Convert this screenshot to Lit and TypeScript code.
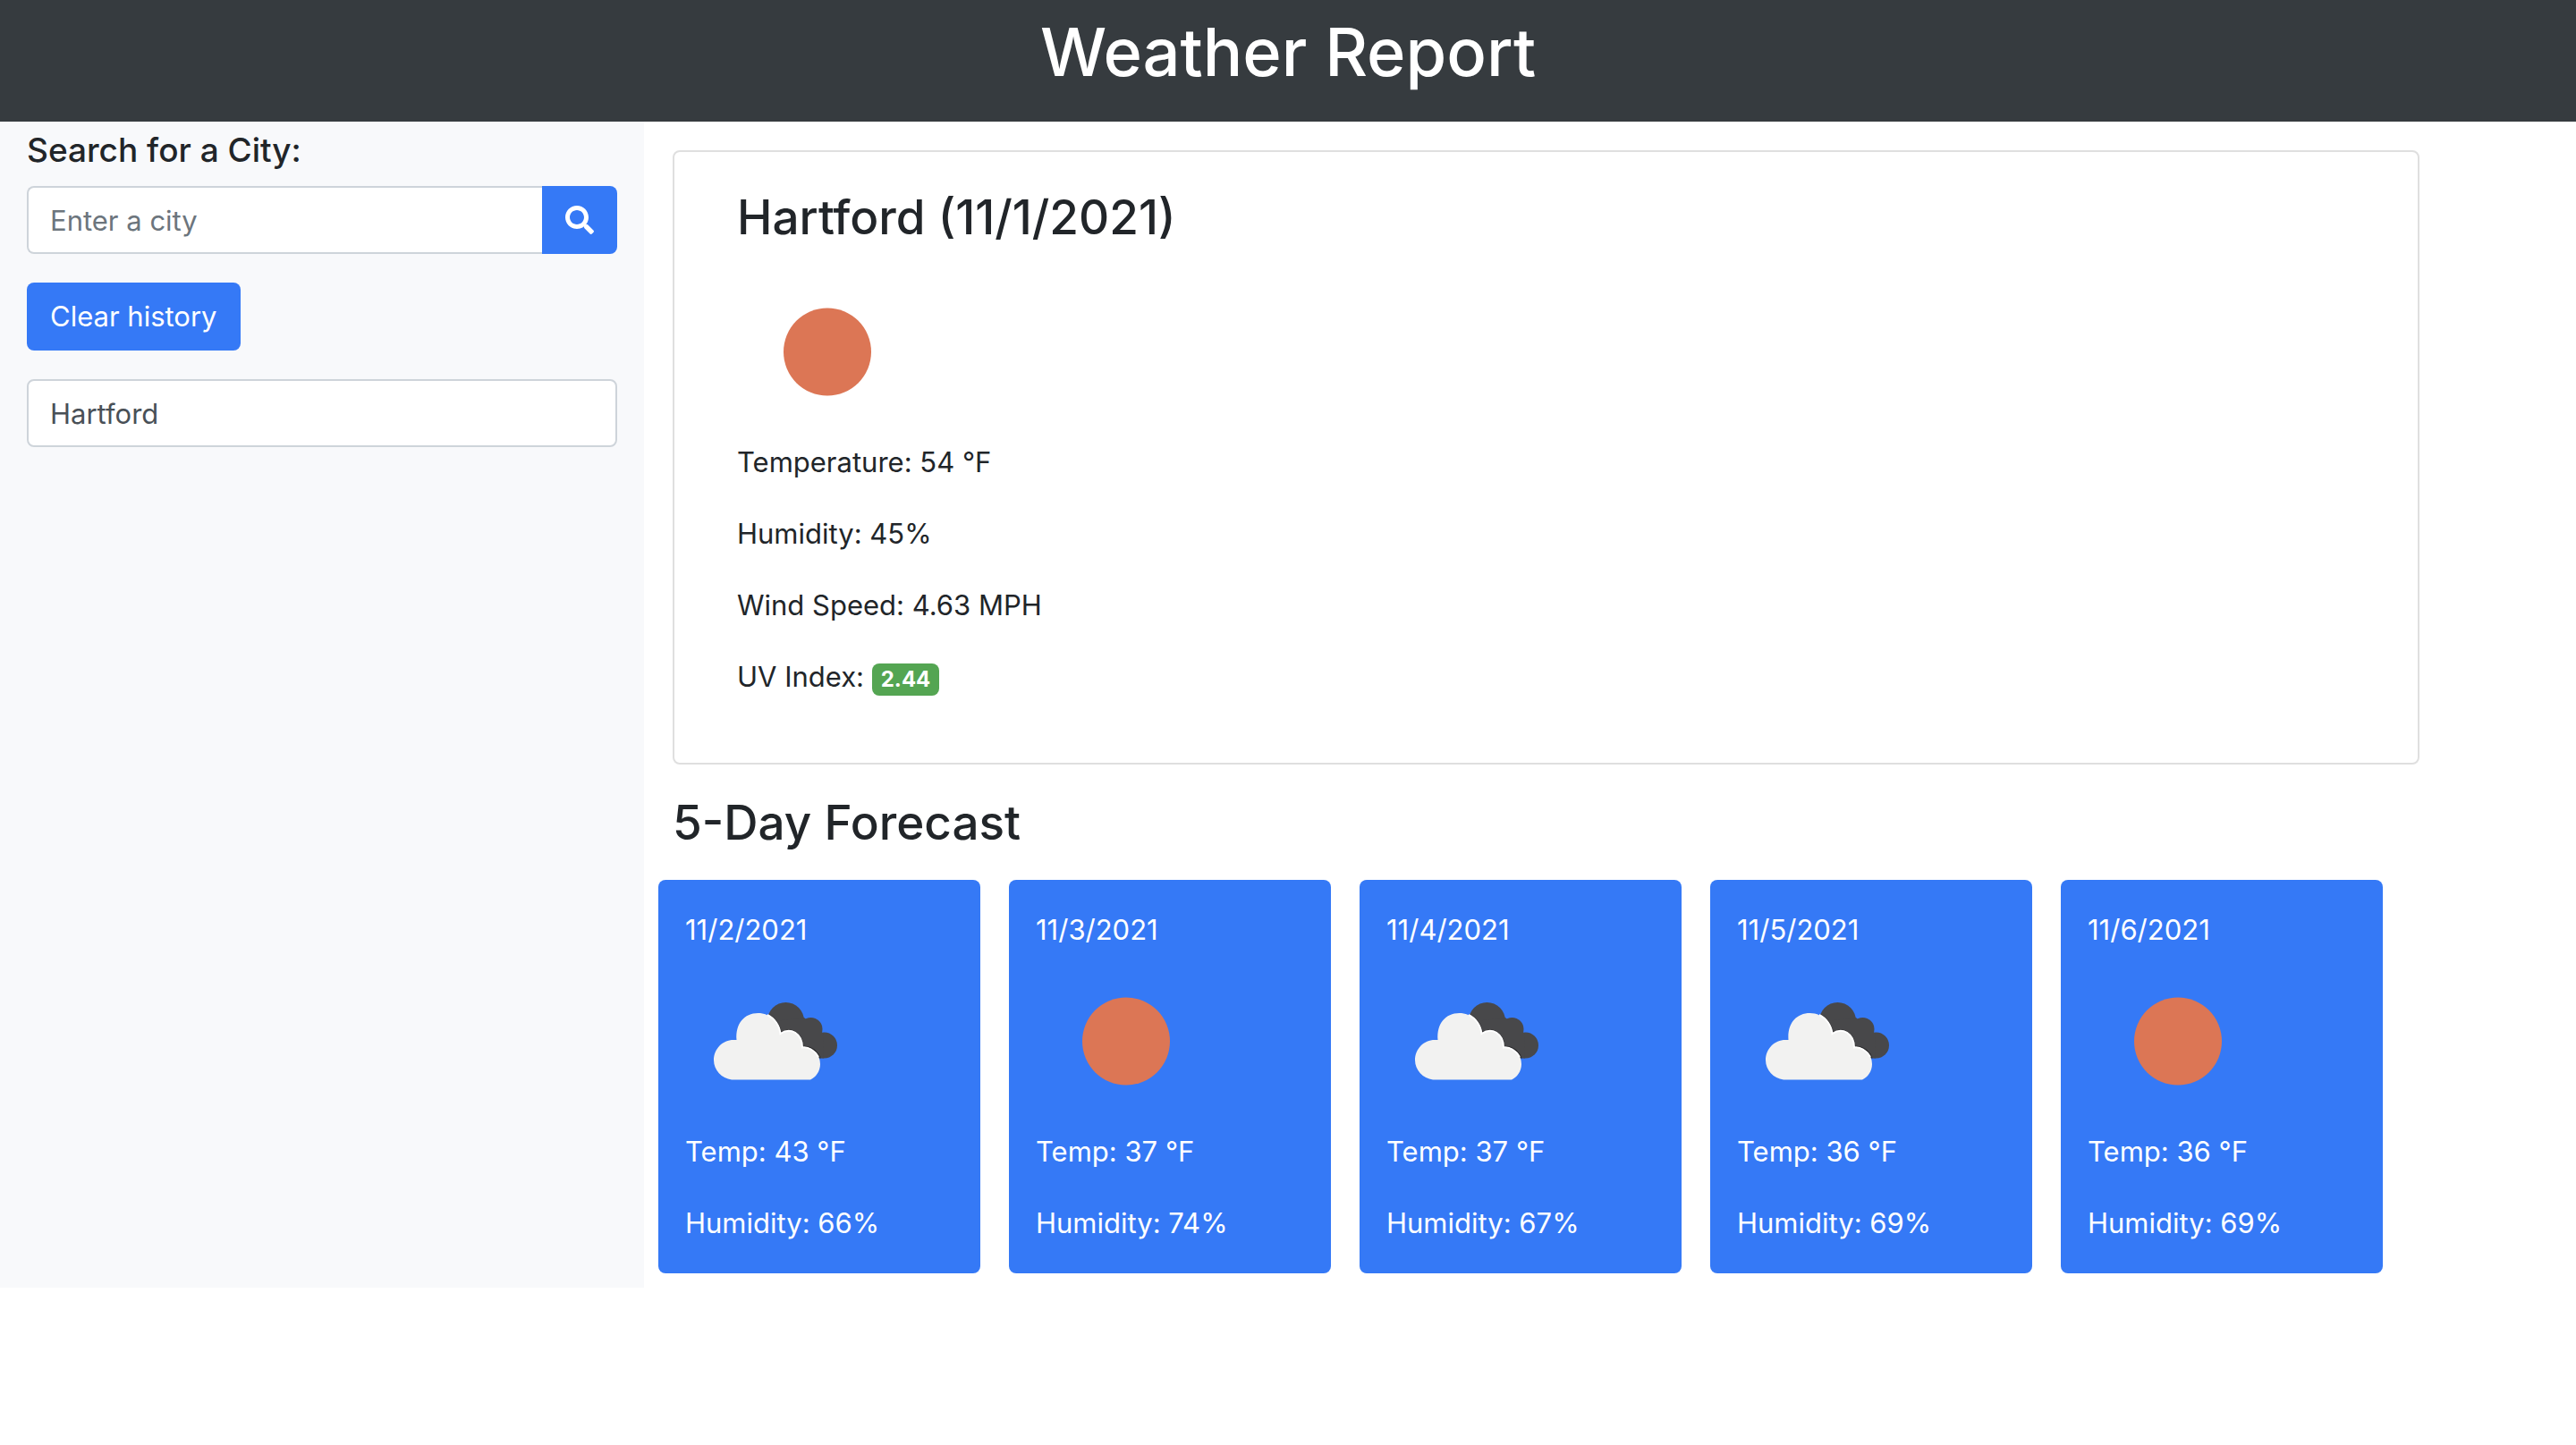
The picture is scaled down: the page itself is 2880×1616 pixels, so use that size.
import { LitElement, html, css, svg } from "lit";
import { customElement, property, state } from "lit/decorators.js";

type Sky = "sun" | "clouds";

interface Day {
  date: string;
  sky: Sky;
  temp: number;
  humidity: number;
}

const FORECAST: Day[] = [
  { date: "11/2/2021", sky: "clouds", temp: 43, humidity: 66 },
  { date: "11/3/2021", sky: "sun", temp: 37, humidity: 74 },
  { date: "11/4/2021", sky: "clouds", temp: 37, humidity: 67 },
  { date: "11/5/2021", sky: "clouds", temp: 36, humidity: 69 },
  { date: "11/6/2021", sky: "sun", temp: 36, humidity: 69 },
];

const SUN = svg`<circle cx="101" cy="100.500" r="49" fill="#dc7655"></circle>`;

// The rear cloud is dark; the front one carries a thin dark rim and a white edge over it.
const FRONT =
  "M52 143.500 C41 142 32 133 32 121.500 C32 109 42 99 54 99 H57.500 C56 81 66 69 81.500 69 C95 69 105 79 106.500 92 C118 84 131 92 131 107.500 C141 106 151 114 151 126 C151 134 146 141 140 143.500 Z";

const CLOUDS = svg`
  <g fill="#48484a">
    <circle cx="112.500" cy="77.500" r="20.500"></circle>
    <circle cx="140.500" cy="87" r="13"></circle>
    <circle cx="155.500" cy="105" r="14.500"></circle>
    <path d="M100 78 L133 74 L154 92 L155 119.500 L130 119 Z"></path>
  </g>
  <clipPath id="rear">
    <circle cx="112.500" cy="77.500" r="20.500"></circle>
    <circle cx="140.500" cy="87" r="13"></circle>
    <circle cx="155.500" cy="105" r="14.500"></circle>
    <path d="M100 78 L133 74 L154 92 L155 119.500 L130 119 Z"></path>
  </clipPath>
  <path d=${FRONT} fill="none" stroke="#2b2b2d" stroke-width="3" clip-path="url(#rear)"></path>
  <path d=${FRONT} fill="#f2f2f1"></path>
  <path d="M92 71 C100 75 105.500 83 106.500 92 C118 84 131 92 131 107.500 C138 106.500 145 111 149 118"
    fill="none" stroke="#ffffff" stroke-width="2"></path>`;

@customElement("weather-icon")
export class WeatherIcon extends LitElement {
  @property() sky: Sky = "sun";

  static styles = css`
    :host {
      display: block;
    }
    .icon {
      display: block;
      width: 200px;
      height: 200px;
    }
  `;

  render() {
    return html`<svg
      class="icon"
      viewBox="0 0 200 200"
      role="img"
      aria-label=${this.sky === "sun" ? "Clear" : "Cloudy"}
    >
      ${this.sky === "sun" ? SUN : CLOUDS}
    </svg>`;
  }
}

@customElement("app-root")
export class AppRoot extends LitElement {
  @state() private cities = ["Hartford"];

  static styles = css`
    :host {
      display: block;
      color: #212529;
      font-family: Inter, "Liberation Sans", sans-serif;
      font-size: 31px;
      line-height: 48px;
    }
    * {
      box-sizing: border-box;
    }
    h1,
    h2,
    p {
      margin: 0;
    }
    h1,
    h2 {
      font-weight: 500;
    }
    .header {
      padding: 10px 30px 30px;
      background: #363b3f;
      color: #ffffff;
      text-align: center;
    }
    .title {
      font-size: 74px;
      line-height: 96px;
    }
    .layout {
      display: grid;
      grid-template-columns: 1fr 3fr;
    }
    .sidebar {
      display: flex;
      flex-direction: column;
      align-items: flex-start;
      gap: 32px;
      padding: 8px 30px;
      background: #f8f9fb;
    }
    .search {
      width: 100%;
    }
    .label {
      display: block;
      margin-bottom: 16px;
      font-size: 37px;
      font-weight: 500;
      line-height: 48px;
    }
    .group {
      display: flex;
    }
    .field {
      width: 100%;
      min-width: 0;
      height: 76px;
      padding: 0 24px;
      border: 2px solid #ced4da;
      border-radius: 8px;
      background: #ffffff;
      color: #495057;
      font: inherit;
      text-align: left;
    }
    .field::placeholder {
      color: #6c757d;
      opacity: 1;
    }
    .group .field {
      flex: 1;
      border-right: 0;
      border-radius: 8px 0 0 8px;
    }
    .button {
      height: 76px;
      padding: 0 26px;
      border: 0;
      border-radius: 8px;
      background: #3579f6;
      color: #ffffff;
      font: inherit;
    }
    .go {
      border-radius: 0 8px 8px 0;
    }
    .glass {
      display: block;
      width: 32px;
      height: 32px;
    }
    .main {
      padding: 32px 32px 16px;
    }
    .today {
      margin: 0 143px 32px 0;
      padding: 40px 70px;
      border: 2px solid #dfdfdf;
      border-radius: 8px;
    }
    .heading {
      margin-bottom: 16px;
      font-size: 53px;
      line-height: 67px;
    }
    .line {
      margin-bottom: 32px;
    }
    .badge {
      display: inline-block;
      padding: 6px 10px;
      border-radius: 8px;
      background: #54a552;
      color: #ffffff;
      font-size: 24px;
      font-weight: 700;
      line-height: 24px;
    }
    .days {
      display: flex;
      gap: 32px;
      margin: 0 -16px;
      padding-top: 14px;
    }
    .day {
      flex: 0 0 360px;
      padding: 32px 30px;
      border-radius: 8px;
      background: #3579f6;
      color: #ffffff;
    }
    .day .line:last-child {
      margin-bottom: 0;
    }
  `;

  private search(event: Event) {
    event.preventDefault();
    const field = this.renderRoot.querySelector<HTMLInputElement>("#city");
    const name = field?.value.trim();
    if (field && name) {
      this.cities = [...this.cities, name];
      field.value = "";
    }
  }

  render() {
    return html`
      <header class="header"><h1 class="title">Weather Report</h1></header>
      <div class="layout">
        <aside class="sidebar">
          <form class="search" @submit=${this.search}>
            <label class="label" for="city">Search for a City:</label>
            <div class="group">
              <input class="field" id="city" type="text" placeholder="Enter a city" />
              <button class="button go" type="submit" aria-label="Search">
                <svg class="glass" viewBox="0 0 512 512" fill="currentColor" aria-hidden="true">
                  <path
                    d="M505 442.700L405.300 343c-4.500-4.500-10.600-7-17-7H372c27.600-35.300 44-79.700 44-128C416 93.100 322.900 0 208 0S0 93.100 0 208s93.100 208 208 208c48.300 0 92.700-16.400 128-44v16.300c0 6.400 2.500 12.500 7 17l99.700 99.700c9.400 9.400 24.600 9.400 33.900 0l28.300-28.300c9.400-9.400 9.400-24.600.1-34zM208 336c-70.700 0-128-57.200-128-128 0-70.700 57.200-128 128-128 70.700 0 128 57.200 128 128 0 70.700-57.200 128-128 128z"
                  ></path>
                </svg>
              </button>
            </div>
          </form>
          <button class="button" type="button" @click=${() => (this.cities = [])}>
            Clear history
          </button>
          ${this.cities.map(
            (city) => html`<input class="field" type="text" readonly aria-label="Past search" .value=${city} />`
          )}
        </aside>
        <main class="main">
          <section class="today">
            <h2 class="heading">Hartford (11/1/2021)</h2>
            <weather-icon sky="sun"></weather-icon>
            <p class="line">Temperature: 54 °F</p>
            <p class="line">Humidity: 45%</p>
            <p class="line">Wind Speed: 4.63 MPH</p>
            <p class="line">UV Index: <span class="badge">2.44</span></p>
          </section>
          <h2 class="heading">5-Day Forecast</h2>
          <div class="days">
            ${FORECAST.map(
              (day) => html`<article class="day">
                <p>${day.date}</p>
                <weather-icon sky=${day.sky}></weather-icon>
                <p class="line">Temp: ${day.temp} °F</p>
                <p class="line">Humidity: ${day.humidity}%</p>
              </article>`
            )}
          </div>
        </main>
      </div>
    `;
  }
}
